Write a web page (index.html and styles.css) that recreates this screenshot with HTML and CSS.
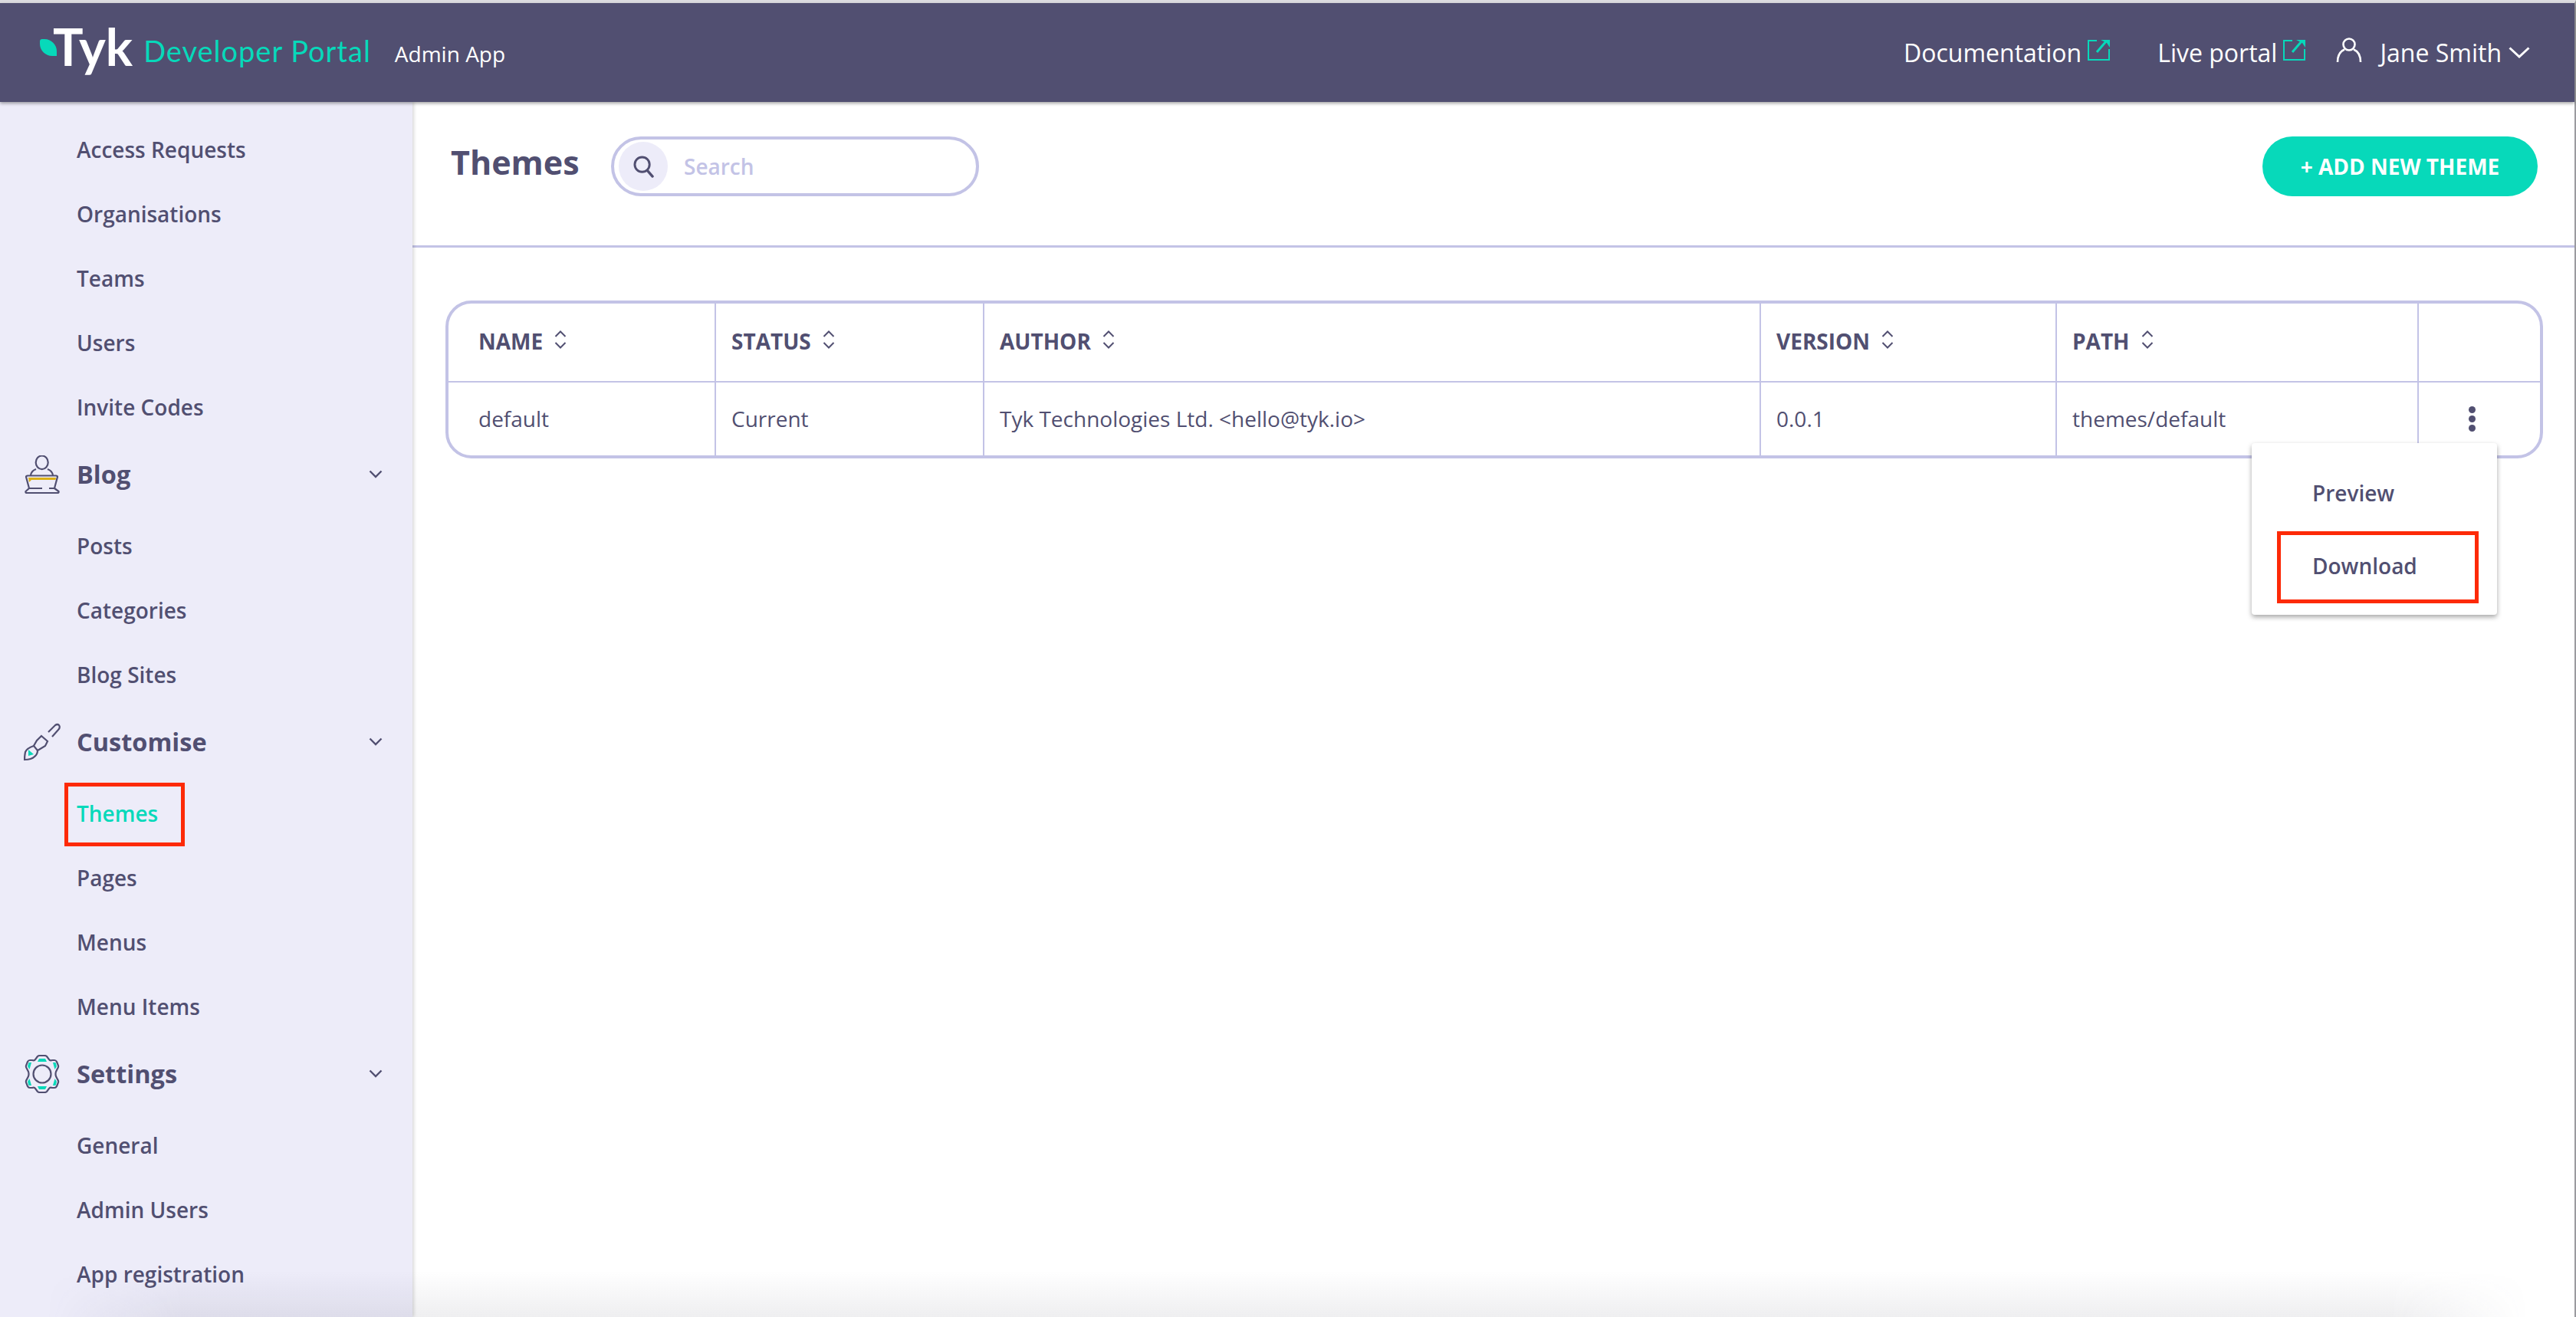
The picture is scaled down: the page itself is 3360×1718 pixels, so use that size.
FILE: index.html
```html
<!DOCTYPE html>
<html>

<head>
    <title>Tyk Developer Portal - Themes</title>
    <link rel="stylesheet" href="styles.css">
</head>

<body>
    <svg class="sprites" width="0" height="0">
        <symbol id="ext" viewBox="0 0 30 28">
            <path d="M12 2H1V27H28V13" fill="none" stroke="#07d9ba" stroke-width="2" />
            <path d="M12 17L24 3" fill="none" stroke="#07d9ba" stroke-width="3" />
            <path d="M17 1H29V11L25 5Z" fill="#07d9ba" />
        </symbol>
        <symbol id="sort" viewBox="0 0 16 24">
            <path d="M1.5 8L8 1.5L14.500 8M1.500 16L8 22.500L14.500 16" fill="none" stroke="#514f71" stroke-width="2" />
        </symbol>
        <symbol id="chev" viewBox="0 0 18 11">
            <path d="M1.500 1.500L9 9L16.500 1.500" fill="none" stroke="#514f71" stroke-width="2.400" />
        </symbol>
    </svg>

    <div class="app">
        <header class="topbar">
            <div class="brand">
                <span class="leaf"></span>
                <span class="brand-tyk">Tyk</span>
                <div class="brand-sub">
                    <span class="brand-portal">Developer Portal</span>
                    <span class="brand-app">Admin App</span>
                </div>
            </div>
            <nav class="top-links">
                <a class="top-link">Documentation <svg class="ext-icon"><use href="#ext" /></svg></a>
                <a class="top-link">Live portal <svg class="ext-icon"><use href="#ext" /></svg></a>
                <svg class="user-icon" viewBox="0 0 34 32">
                    <circle cx="17" cy="9" r="7.500" fill="none" stroke="#fff" stroke-width="2.600" />
                    <path d="M2 32C2 24 5 18 11 15.500M32 32C32 24 29 18 23 15.500" fill="none" stroke="#fff" stroke-width="2.600" />
                </svg>
                <a class="top-user">Jane Smith</a>
                <svg class="user-chev" viewBox="0 0 28 15">
                    <path d="M1.500 1.500L14 13L26.500 1.500" fill="none" stroke="#fff" stroke-width="3" />
                </svg>
            </nav>
        </header>

        <div class="layout">
            <aside class="sidebar">
                <ul class="nav-list">
                    <li class="nav-item">Access Requests</li>
                    <li class="nav-item">Organisations</li>
                    <li class="nav-item">Teams</li>
                    <li class="nav-item">Users</li>
                    <li class="nav-item">Invite Codes</li>
                    <li class="nav-group">
                        <svg class="group-icon" viewBox="0 0 46 50" fill="none" stroke="#514f71" stroke-width="2.200">
                            <path d="M5 29H41L40.500 32H9L6 35Z" fill="#dcb016" stroke="none" />
                            <ellipse cx="22.700" cy="9.300" rx="8" ry="8.800" />
                            <path d="M8 26Q9 20 15 18M30 18Q36 20 37 26" />
                            <path d="M23 43H6L2 28Q2 26.500 4 26.500H41Q43 26.500 43 28L39 43H32" />
                            <path d="M6 43L1.500 47Q1 49 3 49H43Q45 49 44.500 47L39 43" />
                        </svg>
                        <span>Blog</span>
                        <svg class="group-chev"><use href="#chev" /></svg>
                    </li>
                    <li class="nav-item">Posts</li>
                    <li class="nav-item">Categories</li>
                    <li class="nav-item">Blog Sites</li>
                    <li class="nav-group">
                        <svg class="group-icon" viewBox="0 0 48 48" fill="none" stroke="#514f71" stroke-width="2.200">
                            <path d="M6 34L13 40L6 42Z" fill="#07d9ba" stroke="none" />
                            <path d="M32 11L41 2Q44 0 46 2Q48 5 45 8L37 17" />
                            <path d="M23 16L31 23L28 29L18 35L13 29L17 22Z" />
                            <path d="M13 29Q4 32 2 37Q1 42 1 47Q10 47 14 43Q18 40 18 35" />
                        </svg>
                        <span>Customise</span>
                        <svg class="group-chev"><use href="#chev" /></svg>
                    </li>
                    <li class="nav-item nav-active"><span class="mark-nav"></span>Themes</li>
                    <li class="nav-item">Pages</li>
                    <li class="nav-item">Menus</li>
                    <li class="nav-item">Menu Items</li>
                    <li class="nav-group">
                        <svg class="group-icon" viewBox="0 0 44 50" fill="none" stroke="#514f71" stroke-width="2.200">
                            <g fill="#07d9ba" stroke="none">
                                <path d="M18 5H26L28 9H16Z" />
                                <path d="M16 41H28L26 45H18Z" />
                                <path d="M36 10H39.500L41 15L38.500 19Z" />
                                <path d="M8 10H4.500L3 15L5.500 19Z" />
                                <path d="M36 40H39.500L41 35L38.500 31Z" />
                                <path d="M8 40H4.500L3 35L5.500 31Z" />
                            </g>
                            <path d="M16 2Q17 1 19 1H25Q27 1 28 2L31 6Q32 8 35 7L38 7Q40 7 41 9L43 14Q43.500 16 42 18L40 22Q39 25 40 28L42 32Q43.500 34 43 36L41 41Q40 43 38 43L35 43Q32 42 31 44L28 48Q27 49 25 49H19Q17 49 16 48L13 44Q12 42 9 43L6 43Q4 43 3 41L1 36Q.5 34 2 32L4 28Q5 25 4 22L2 18Q.5 16 1 14L3 9Q4 7 6 7L9 7Q12 8 13 6Z" />
                            <circle cx="22" cy="25" r="11.500" />
                        </svg>
                        <span>Settings</span>
                        <svg class="group-chev"><use href="#chev" /></svg>
                    </li>
                    <li class="nav-item">General</li>
                    <li class="nav-item">Admin Users</li>
                    <li class="nav-item">App registration</li>
                </ul>
            </aside>

            <main class="content">
                <div class="toolbar">
                    <h1 class="page-title">Themes</h1>
                    <div class="search">
                        <span class="search-btn">
                            <svg class="search-icon" viewBox="0 0 28 30" fill="none" stroke="#514f71">
                                <circle cx="12" cy="12" r="10" stroke-width="3" />
                                <path d="M19 20L26 28" stroke-width="3.500" stroke-linecap="round" />
                            </svg>
                        </span>
                        <span class="search-text">Search</span>
                    </div>
                    <a class="add-btn">+ ADD NEW THEME</a>
                </div>

                <div class="table-area">
                    <div class="table-box">
                        <table class="themes-table">
                            <colgroup>
                                <col class="col-name">
                                <col class="col-status">
                                <col class="col-author">
                                <col class="col-version">
                                <col class="col-path">
                                <col class="col-actions">
                            </colgroup>
                            <thead>
                                <tr>
                                    <th>NAME <svg class="sort-icon"><use href="#sort" /></svg></th>
                                    <th>STATUS <svg class="sort-icon"><use href="#sort" /></svg></th>
                                    <th>AUTHOR <svg class="sort-icon"><use href="#sort" /></svg></th>
                                    <th>VERSION <svg class="sort-icon"><use href="#sort" /></svg></th>
                                    <th>PATH <svg class="sort-icon"><use href="#sort" /></svg></th>
                                    <th></th>
                                </tr>
                            </thead>
                            <tbody>
                                <tr>
                                    <td>default</td>
                                    <td>Current</td>
                                    <td>Tyk Technologies Ltd. &lt;hello@tyk.io&gt;</td>
                                    <td>0.0.1</td>
                                    <td>themes/default</td>
                                    <td>
                                        <div class="kebab"><i></i><i></i><i></i></div>
                                    </td>
                                </tr>
                            </tbody>
                        </table>
                    </div>

                    <div class="dropdown">
                        <div class="dropdown-item">Preview</div>
                        <div class="dropdown-item dropdown-marked">Download</div>
                    </div>
                </div>
            </main>
        </div>
        <div class="bottom-fade"></div>
    </div>
</body>

</html>
```

FILE: styles.css
```css
* {
    box-sizing: border-box;
}

html,
body {
    margin: 0;
    height: 100%;
    overflow: hidden;
}

body {
    font-family: "Open Sans", "Liberation Sans", sans-serif;
    color: #514f71;
    background: #fff;
}

.sprites {
    position: absolute;
}

.app {
    position: relative;
    display: flex;
    flex-direction: column;
    height: 100%;
    border-top: 4px solid #dcdce0;
    border-right: 2px solid #9b9b9f;
}

/* top bar */
.topbar {
    position: relative;
    z-index: 2;
    flex: none;
    display: flex;
    align-items: center;
    justify-content: space-between;
    height: 129px;
    padding: 0 58px 0 52px;
    background: #514f71;
    box-shadow: 0 2px 4px rgba(0, 0, 0, 0.35);
}

.brand {
    display: flex;
    align-items: center;
}

.leaf {
    width: 22px;
    height: 22px;
    margin-bottom: 13px;
    background: #07d9ba;
    border-radius: 3px 16px 0 16px;
}

.brand-tyk {
    margin-left: -5px;
    padding-bottom: 16px;
    font-family: Lato, sans-serif;
    font-size: 66px;
    line-height: 60px;
    font-weight: 700;
    color: #fff;
}

.brand-sub {
    display: flex;
    align-items: baseline;
    padding-bottom: 6px;
}

.brand-portal {
    margin-left: 14px;
    font-family: Lato, sans-serif;
    font-size: 38px;
    font-weight: 400;
    color: #07d9ba;
    letter-spacing: 1px;
}

.brand-app {
    margin-left: 31px;
    font-size: 28px;
    color: #fff;
}

.top-links {
    display: flex;
    align-items: center;
    color: #fff;
    font-size: 32px;
}

.top-link {
    display: flex;
    align-items: center;
    gap: 8px;
    margin-right: 61px;
}

.top-link:nth-child(2) {
    margin-right: 39px;
}

.ext-icon {
    width: 30px;
    height: 28px;
    margin-top: -8px;
}

.user-icon {
    width: 34px;
    height: 32px;
    margin-top: -8px;
    margin-right: 23px;
}

.user-chev {
    width: 28px;
    height: 15px;
    margin-left: 9px;
}

/* sidebar */
.layout {
    flex: 1;
    display: flex;
    min-height: 0;
}

.sidebar {
    flex: none;
    width: 538px;
    overflow: hidden;
    background: #edecf9;
    box-shadow: 2px 0 4px rgba(0, 0, 0, 0.15);
    position: relative;
    z-index: 1;
}

.nav-list {
    list-style: none;
    margin: 0;
    padding: 20px 0 0;
}

.nav-item {
    position: relative;
    display: flex;
    align-items: center;
    height: 84px;
    padding-left: 100px;
    font-size: 28px;
    font-weight: 600;
}

.nav-active {
    color: #07d9ba;
}

.mark-nav {
    position: absolute;
    left: 84px;
    top: 2px;
    width: 157px;
    height: 83px;
    border: 5px solid #fd2a07;
}

.nav-group {
    display: flex;
    align-items: center;
    height: 97px;
    padding: 0 39px 6px 31px;
    font-size: 32.5px;
    font-weight: 700;
}

.group-icon {
    flex: none;
    width: 48px;
    height: 50px;
    margin-right: 21px;
}

.group-chev {
    width: 18px;
    height: 11px;
    margin-left: auto;
}

/* main area */
.content {
    flex: 1;
    min-width: 0;
    background: #fff;
}

.toolbar {
    display: flex;
    align-items: center;
    height: 190px;
    padding: 0 48px 19px 50px;
    border-bottom: 3px solid #c3c3e6;
}

.page-title {
    width: 209px;
    margin: -12px 0 0;
    font-size: 43px;
    font-weight: 700;
}

.search {
    display: flex;
    align-items: center;
    width: 480px;
    height: 78px;
    padding-left: 6px;
    border: 4px solid #c3c3e6;
    border-radius: 39px;
}

.search-btn {
    display: flex;
    align-items: center;
    justify-content: center;
    width: 64px;
    height: 64px;
    border-radius: 50%;
    background: #edecf9;
}

.search-icon {
    width: 27px;
    height: 29px;
}

.search-text {
    margin-left: 21px;
    font-size: 28px;
    font-weight: 600;
    color: #c3c3e6;
}

.add-btn {
    margin-left: auto;
    display: flex;
    align-items: center;
    justify-content: center;
    width: 359px;
    height: 78px;
    border-radius: 39px;
    background: #07d9ba;
    color: #fff;
    font-size: 28px;
    font-weight: 700;
}

/* table */
.table-area {
    position: relative;
    padding: 69px 41px 0 43px;
}

.table-box {
    border: 4px solid #c3c3e6;
    border-radius: 34px;
    overflow: hidden;
}

.themes-table {
    width: 100%;
    table-layout: fixed;
    border-collapse: collapse;
}

.col-name {
    width: 348px;
}

.col-status {
    width: 350px;
}

.col-author {
    width: 1013px;
}

.col-version {
    width: 386px;
}

.col-path {
    width: 472px;
}

.themes-table th,
.themes-table td {
    padding: 0 0 0 20px;
    border-right: 2px solid #c3c3e6;
    text-align: left;
    white-space: nowrap;
}

.themes-table th:first-child,
.themes-table td:first-child {
    padding-left: 39px;
}

.themes-table th:last-child,
.themes-table td:last-child {
    border-right: 0;
    padding: 0 20px 0 0;
}

.themes-table th {
    height: 102px;
    padding-bottom: 3px;
    border-bottom: 2px solid #c3c3e6;
    font-size: 28px;
    font-weight: 700;
}

.themes-table td {
    height: 96px;
    padding-bottom: 1px;
    font-size: 28px;
}

.sort-icon {
    width: 16px;
    height: 24px;
    margin-left: 8px;
    vertical-align: 1px;
}

.kebab {
    display: flex;
    flex-direction: column;
    align-items: center;
    gap: 3px;
}

.kebab i {
    width: 9px;
    height: 9px;
    border-radius: 50%;
    background: #514f71;
}

.dropdown {
    position: absolute;
    top: 255px;
    right: 101px;
    width: 320px;
    height: 224px;
    padding-top: 17px;
    background: #fff;
    border-radius: 4px;
    box-shadow: 0 3px 6px rgba(0, 0, 0, 0.35);
}

.dropdown-item {
    display: flex;
    align-items: center;
    height: 95px;
    padding-left: 79px;
    font-size: 28px;
    font-weight: 600;
}

.dropdown-marked {
    position: relative;
}

.dropdown-marked::after {
    content: "";
    box-sizing: border-box;
    position: absolute;
    left: 33px;
    top: 3px;
    width: 263px;
    height: 94px;
    border: 5px solid #fd2a07;
}

.bottom-fade {
    position: absolute;
    z-index: 3;
    left: 0;
    right: 0;
    bottom: 0;
    height: 60px;
    background: linear-gradient(to bottom, rgba(70, 70, 90, 0), rgba(70, 70, 90, 0.09));
    -webkit-mask-image: linear-gradient(to right, transparent 60px, #000 240px, #000 calc(100% - 240px), transparent calc(100% - 60px));
    mask-image: linear-gradient(to right, transparent 60px, #000 240px, #000 calc(100% - 240px), transparent calc(100% - 60px));
    pointer-events: none;
}
```
